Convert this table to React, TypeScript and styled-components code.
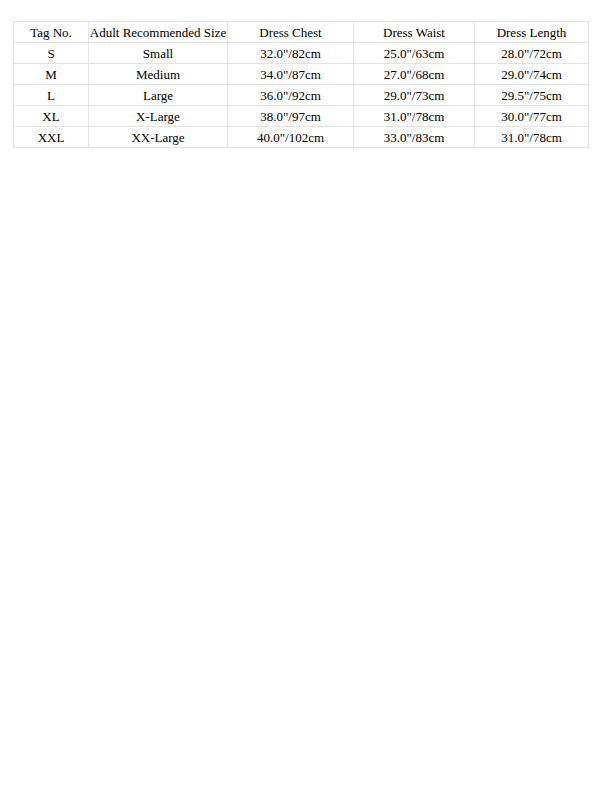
import React from 'react'
import styled, { createGlobalStyle } from 'styled-components'

const GlobalStyle = createGlobalStyle`
    body {
        margin: 0;
        background: #fff;
    }
`

const Page = styled.div`
    padding: 21px 12px 0 13px;
`

const Table = styled.table`
    border-collapse: collapse;
    table-layout: fixed;
    width: 575px;
    font-family: "Liberation Serif", "Times New Roman", serif;
    font-size: 13px;
    color: #000;
`

const Cell = styled.td`
    border: 1px solid #e3e3e3;
    height: 20px;
    padding: 1px 0 0;
    box-sizing: border-box;
    text-align: center;
    vertical-align: middle;
    white-space: nowrap;
    line-height: 19px;
`

const cols = [75, 139, 126, 121, 114]

const rows = [
    ['Tag No.', 'Adult Recommended Size', 'Dress Chest', 'Dress Waist', 'Dress Length'],
    ['S', 'Small', '32.0"/82cm', '25.0"/63cm', '28.0"/72cm'],
    ['M', 'Medium', '34.0"/87cm', '27.0"/68cm', '29.0"/74cm'],
    ['L', 'Large', '36.0"/92cm', '29.0"/73cm', '29.5"/75cm'],
    ['XL', 'X-Large', '38.0"/97cm', '31.0"/78cm', '30.0"/77cm'],
    ['XXL', 'XX-Large', '40.0"/102cm', '33.0"/83cm', '31.0"/78cm'],
]

const App = () => {
    return (
        <Page>
            <GlobalStyle />
            <Table>
                <colgroup>
                    {cols.map((w, i) => <col key={i} style={{ width: w }} />)}
                </colgroup>
                <tbody>
                    {rows.map((r, i) => (
                        <tr key={i}>
                            {r.map((c, j) => <Cell key={j}>{c}</Cell>)}
                        </tr>
                    ))}
                </tbody>
            </Table>
        </Page>
    )
}

export default App
